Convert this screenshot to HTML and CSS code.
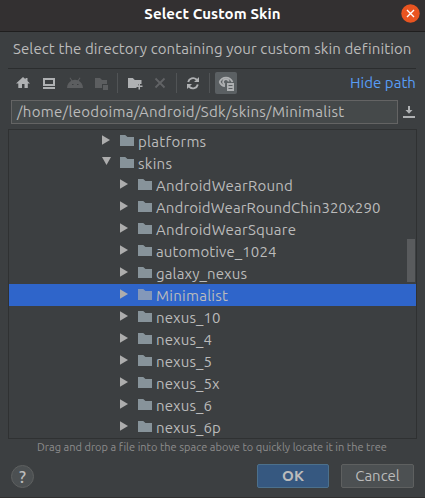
FILE: index.html
```html
<!DOCTYPE html>
<html lang="en">
<head>
<meta charset="utf-8">
<title>Select Custom Skin</title>
<link rel="stylesheet" href="styles.css">
</head>
<body>
<svg class="defs" width="0" height="0">
  <symbol id="folder" viewBox="0 0 14 11"><path d="M0 0h5.2l2.3 2H14v9H0z" fill="currentColor"/></symbol>
  <symbol id="closed" viewBox="0 0 8 10"><path d="M0 .3 8 5 0 9.700z" fill="#adadad"/></symbol>
  <symbol id="open" viewBox="0 0 9 8"><path d="M0 0h9L4.500 8z" fill="#adadad"/></symbol>
</svg>
<div class="dialog">
  <header class="titlebar">
    <h1 class="title">Select Custom Skin</h1>
    <button class="close" aria-label="Close"><svg width="19" height="19" viewBox="0 0 19 19"><circle cx="9.500" cy="9.500" r="9.200" fill="#e95420"/><path d="m6 6 7 7m0-7-7 7" stroke="#fff" stroke-width="1.400"/></svg></button>
  </header>
  <p class="description"><span>Select the directory containing your custom skin definition</span></p>
  <div class="toolbar">
    <svg class="tools" width="232" height="29" viewBox="8 69 232 29">
      <g fill="#afb1b3">
        <path d="m23 77-7 6.500h2.300V88H22v-4h2.500v4h3.300v-4.500H30L27.500 81v-3h-2v1.300z"/>
        <path fill-rule="evenodd" d="M43 78h12v8H43zm2 2v4h8v-4zM43 87h12v2H43z"/>
        <path d="M128 78h4.800l2 2h6.700v4H138v2.500h-1.500V88H128z"/>
        <path d="M138.500 83h1.500v2.500h2.500V87H140v2.500h-1.500V87H136v-1.500h2.500z"/>
      </g>
      <g fill="#5c5e60">
        <path d="M67 88c.1-3.700 2-6 4.300-7.300L69.500 78l.8-.5 1.900 2.700a8 8 0 0 1 5.600 0l1.900-2.700.8.500-1.800 2.700C81 82 82.900 84.300 83 88z"/>
        <path d="M95 78h5l2 2h5v4h-5v4h-7z"/><path d="M103 85h5v5h-5z"/>
      </g>
      <path d="M72 84.500h1.500m3.500 0h1.500" stroke="#3c3f41" stroke-width="1.200"/>
      <path d="M117.500 73v20M176.500 73v20M209.500 73v20" stroke="#515456"/>
      <path d="m155.500 78.500 9 9m0-9-9 9" stroke="#616365" stroke-width="1.800"/>
      <g fill="none" stroke="#afb1b3" stroke-width="1.900">
        <path d="M188.200 82a5 5 0 0 1 8.300-2.500l1.300 1.500M197.800 84.500a5 5 0 0 1-8.300 2.500l-1.300-1.500"/>
      </g>
      <path d="M199 77v5h-5zM187 89v-5h5z" fill="#afb1b3"/>
      <rect x="215" y="72" width="22" height="22" rx="2" fill="#5b6063"/>
      <path d="M219.500 82c1.500-3 3.800-4.300 6.500-4.300s5 1.300 6.500 4.300M219.500 82c1.200 2.400 3.200 3.900 5.500 4.200" fill="none" stroke="#afb1b3" stroke-width="1.700"/>
      <path d="M225 84.500a2.800 2.800 0 1 1 3.700-3" fill="none" stroke="#afb1b3" stroke-width="1.700"/>
      <path d="M226.500 82.500h8v9h-8z" fill="#5b6063"/><path d="M227 83h7v8h-7z" fill="#afb1b3"/>
      <path d="M228.500 85.500h4m-4 3h4" stroke="#5b6063"/>
    </svg>
    <a class="hide"><span>Hide path</span></a>
  </div>
  <div class="path-row">
    <div class="path"><span>/home/leodoima/Android/Sdk/skins/Minimalist</span></div>
    <svg class="history" width="12" height="12" viewBox="0 0 12 12"><path d="M5 0h2v4h2.500L6 7.700 2.500 4H5zM0 10h12v2H0z" fill="#afb1b3"/></svg>
  </div>
  <div class="tree">
    <ul class="rows">
      <li class="row top loose"><svg class="arrow"><use href="#closed"/></svg><svg class="folder"><use href="#folder"/></svg><span>platforms</span></li>
      <li class="row top loose"><svg class="arrow expanded"><use href="#open"/></svg><svg class="folder"><use href="#folder"/></svg><span>skins</span></li>
      <li class="row"><svg class="arrow"><use href="#closed"/></svg><svg class="folder"><use href="#folder"/></svg><span>AndroidWearRound</span></li>
      <li class="row"><svg class="arrow"><use href="#closed"/></svg><svg class="folder"><use href="#folder"/></svg><span>AndroidWearRoundChin320x290</span></li>
      <li class="row"><svg class="arrow"><use href="#closed"/></svg><svg class="folder"><use href="#folder"/></svg><span>AndroidWearSquare</span></li>
      <li class="row"><svg class="arrow"><use href="#closed"/></svg><svg class="folder"><use href="#folder"/></svg><span>automotive_1024</span></li>
      <li class="row"><svg class="arrow"><use href="#closed"/></svg><svg class="folder"><use href="#folder"/></svg><span>galaxy_nexus</span></li>
      <li class="row loose selected"><svg class="arrow"><use href="#closed"/></svg><svg class="folder"><use href="#folder"/></svg><span>Minimalist</span></li>
      <li class="row"><svg class="arrow"><use href="#closed"/></svg><svg class="folder"><use href="#folder"/></svg><span>nexus_10</span></li>
      <li class="row"><svg class="arrow"><use href="#closed"/></svg><svg class="folder"><use href="#folder"/></svg><span>nexus_4</span></li>
      <li class="row"><svg class="arrow"><use href="#closed"/></svg><svg class="folder"><use href="#folder"/></svg><span>nexus_5</span></li>
      <li class="row"><svg class="arrow"><use href="#closed"/></svg><svg class="folder"><use href="#folder"/></svg><span>nexus_5x</span></li>
      <li class="row"><svg class="arrow"><use href="#closed"/></svg><svg class="folder"><use href="#folder"/></svg><span>nexus_6</span></li>
      <li class="row"><svg class="arrow"><use href="#closed"/></svg><svg class="folder"><use href="#folder"/></svg><span>nexus_6p</span></li>
    </ul>
    <div class="thumb"></div>
  </div>
  <p class="hint"><span>Drag and drop a file into the space above to quickly locate it in the tree</span></p>
  <footer class="footer">
    <button class="help">?</button>
    <button class="btn ok">OK</button>
    <button class="btn cancel">Cancel</button>
  </footer>
</div>
</body>
</html>
```
FILE: styles.css
```css
* { box-sizing: border-box; }
body { margin: 0; background: #3c3f41; color: #bbb; font: 15px/22px "Ubuntu", "Noto Sans", sans-serif; white-space: nowrap; }
h1, p, ul { margin: 0; padding: 0; }
button { padding: 0; border: 0; color: inherit; font: inherit; }
.defs { position: absolute; }
.dialog { display: flex; flex-direction: column; width: 425px; height: 498px; overflow: hidden; border-bottom: 1px solid #302f2f; }
.titlebar { position: relative; height: 32px; background: #333031; border-bottom: 1px solid #1f1e1e; text-align: center; }
.title { font-size: 15px; font-weight: 700; line-height: 28px; color: #fff; letter-spacing: .1px; }
.close { position: absolute; right: 5px; top: 4px; width: 19px; height: 19px; background: none; }
.close svg { display: block; }
.description { height: 37px; margin: 0 9px 0 8px; padding: 6px 0 0 5px; border-bottom: 1px solid #2b2d2e; letter-spacing: .105px; }
.toolbar { display: flex; height: 29px; padding: 0 9px 0 8px; justify-content: space-between; }
.hide { padding-top: 3px; color: #589df6; letter-spacing: .05px; }
.path-row { display: flex; align-items: center; gap: 5px; height: 28px; padding: 0 10px 0 11px; }
.path { width: 387px; height: 24px; border: 1px solid #646464; background: #45494a; padding-left: 5px; line-height: 22px; letter-spacing: .3px; }
.tree { position: relative; height: 311px; margin: 3px 8px 0; border: 1px solid #2f3132; overflow: hidden; }
.rows { list-style: none; }
.row { display: flex; height: 22px; padding-left: 111px; align-items: flex-start; letter-spacing: .11px; }
.row.top { padding-left: 93px; }
.row span { margin-left: 4px; line-height: 24px; }
.row:nth-child(3), .row:nth-child(5) { letter-spacing: .24px; }
.row.loose { letter-spacing: .27px; }
.arrow { width: 8px; height: 10px; margin: 5px 10px 0 0; }
.arrow.expanded { width: 9px; height: 8px; margin-right: 9px; }
.folder { width: 14px; height: 11px; margin-top: 5px; color: #87939a; }
.selected { background: #2f65ca; }
.selected .folder { color: #8498b9; }
.thumb { position: absolute; right: 1px; top: 109px; width: 8px; height: 43px; background: #595b5d; }
.hint { height: 25px; padding: 0 0 0 37px; color: #8c8c8c; font-size: 11px; line-height: 16px; letter-spacing: .02px; }
.footer { display: flex; align-items: flex-start; height: 33px; padding: 0 11px; }
.help { width: 23px; height: 23px; margin: 1px 223px 0 0; border: 1px solid #5e6060; border-radius: 50%; background: #4c5052; font-size: 17px; font-weight: 500; line-height: 21px; }
.btn { height: 24px; border: 1px solid #5e6060; border-radius: 2px; background: #4c5052; line-height: 22px; }
.ok { width: 72px; margin-right: 12px; background: #365880; border-color: #4c708c; font-weight: 700; }
.cancel { width: 73px; }
```
